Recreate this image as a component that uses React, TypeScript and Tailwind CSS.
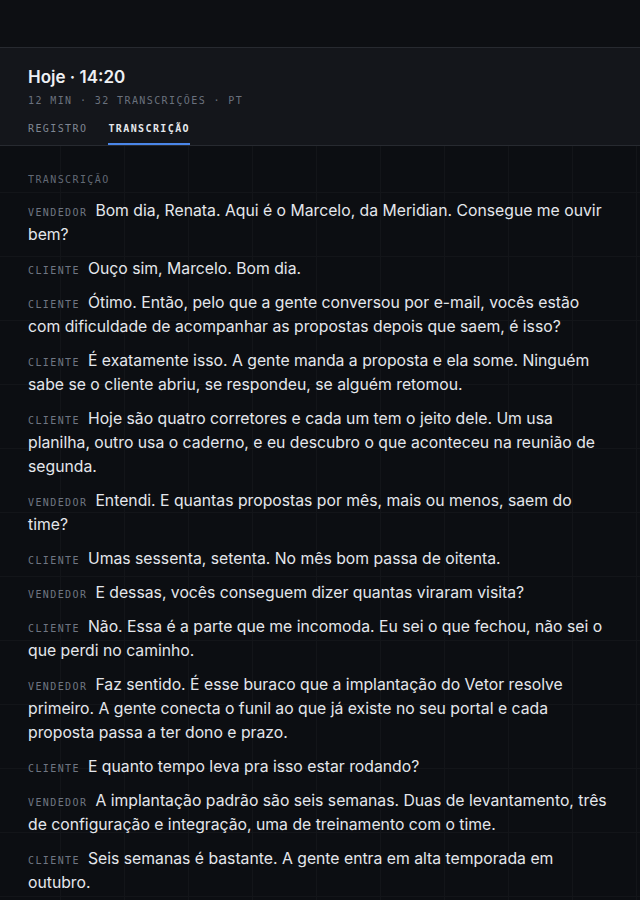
const turns = [
  { who: "VENDEDOR", text: "Bom dia, Renata. Aqui é o Marcelo, da Meridian. Consegue me ouvir bem?" },
  { who: "CLIENTE", text: "Ouço sim, Marcelo. Bom dia." },
  { who: "CLIENTE", text: "Ótimo. Então, pelo que a gente conversou por e-mail, vocês estão com dificuldade de acompanhar as propostas depois que saem, é isso?" },
  { who: "CLIENTE", text: "É exatamente isso. A gente manda a proposta e ela some. Ninguém sabe se o cliente abriu, se respondeu, se alguém retomou." },
  { who: "CLIENTE", text: "Hoje são quatro corretores e cada um tem o jeito dele. Um usa planilha, outro usa o caderno, e eu descubro o que aconteceu na reunião de segunda." },
  { who: "VENDEDOR", text: "Entendi. E quantas propostas por mês, mais ou menos, saem do time?" },
  { who: "CLIENTE", text: "Umas sessenta, setenta. No mês bom passa de oitenta." },
  { who: "VENDEDOR", text: "E dessas, vocês conseguem dizer quantas viraram visita?" },
  { who: "CLIENTE", text: "Não. Essa é a parte que me incomoda. Eu sei o que fechou, não sei o que perdi no caminho." },
  { who: "VENDEDOR", text: "Faz sentido. É esse buraco que a implantação do Vetor resolve primeiro. A gente conecta o funil ao que já existe no seu portal e cada proposta passa a ter dono e prazo." },
  { who: "CLIENTE", text: "E quanto tempo leva pra isso estar rodando?" },
  { who: "VENDEDOR", text: "A implantação padrão são seis semanas. Duas de levantamento, três de configuração e integração, uma de treinamento com o time." },
  { who: "CLIENTE", text: "Seis semanas é bastante. A gente entra em alta temporada em outubro." },
];

const mono = "font-['DejaVu_Sans_Mono','Liberation_Mono',monospace]";

export default function App() {
  return (
    <div className="min-h-screen bg-[#0c0e12] bg-[linear-gradient(to_right,#131519_1px,transparent_1px),linear-gradient(to_bottom,#131519_1px,transparent_1px)] bg-size-[64px_64px] bg-position-[60px_0px] font-['Inter','Noto_Sans',sans-serif] text-[#e4e7ec]">
      <div className="h-12 bg-[#0d0f13] border-b border-[#272a30]" />

      <header className="bg-[#14161b] border-b border-[#272a30] px-7 pt-[17px]">
        <h1 className="text-[17px] leading-6 font-semibold text-[#eef0f3]">Hoje · 14:20</h1>
        <p className={`${mono} mt-1 text-[10px] leading-4 tracking-[0.14em] text-[#6a717d]`}>
          12 MIN · 32 TRANSCRIÇÕES · PT
        </p>
        <nav className={`${mono} mt-3 flex gap-[21px] text-[10px] leading-4 tracking-[0.14em]`}>
          <span className="pb-[6px] border-b-2 border-transparent text-[#7f8692]">REGISTRO</span>
          <span className="pb-[6px] border-b-2 border-[#4a86e8] text-[#e6e8ec] font-semibold">TRANSCRIÇÃO</span>
        </nav>
      </header>

      <main className="px-7 pt-[26px] pb-6">
        <p className={`${mono} mb-[11px] text-[10px] leading-4 tracking-[0.14em] text-[#626975]`}>TRANSCRIÇÃO</p>
        <div className="flex flex-col gap-2.5">
          {turns.map((t, i) => (
            <p key={i} className="text-[15.75px] leading-6">
              <span className={`${mono} mr-2 text-[10px] leading-none tracking-[0.14em] text-[#6f7682]`}>{t.who}</span>
              {t.text}
            </p>
          ))}
        </div>
      </main>
    </div>
  );
}
